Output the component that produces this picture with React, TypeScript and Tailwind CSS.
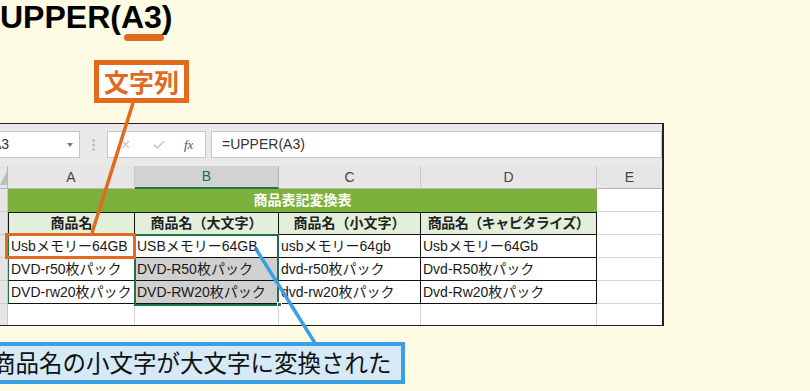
import { Check, X } from 'lucide-react'

const cellFont = { fontFamily: '"Liberation Sans", "Noto Sans CJK JP", sans-serif' }

const rows = [
  ['Usbメモリー64GB', 'USBメモリー64GB', 'usbメモリー64gb', 'Usbメモリー64Gb'],
  ['DVD-r50枚パック', 'DVD-R50枚パック', 'dvd-r50枚パック', 'Dvd-R50枚パック'],
  ['DVD-rw20枚パック', 'DVD-RW20枚パック', 'dvd-rw20枚パック', 'Dvd-Rw20枚パック'],
]

function RowHead() {
  return <div className="w-[8px] h-full shrink-0 bg-[#e6e6e6] border-r border-b border-[#c9c9c9]" />
}

function Sheet() {
  return (
    <div className="w-[664px] h-[203px] border-t border-b border-r-2 border-[#222] bg-white flex flex-col" style={cellFont}>
      {/* formula bar */}
      <div className="h-[42px] bg-[#e9e9e9] flex items-start pt-[7px] overflow-hidden">
        <div className="ml-[-10px] w-[90px] h-[27px] shrink-0 bg-white border border-[#c6c6c6] flex items-center pl-[1px] text-[14px] text-[#333] relative">
          A3
          <svg className="absolute right-[6px] top-[11px]" width="6" height="4" viewBox="0 0 6 4">
            <path d="M0 0h6L3 4z" fill="#7a7a7a" />
          </svg>
        </div>
        <div className="w-[27px] h-[27px] shrink-0 flex items-center justify-center">
          <svg width="3" height="12" viewBox="0 0 3 12">
            <circle cx="1.5" cy="1.5" r="1.2" fill="#b3b3b3" />
            <circle cx="1.5" cy="6" r="1.2" fill="#b3b3b3" />
            <circle cx="1.5" cy="10.5" r="1.2" fill="#b3b3b3" />
          </svg>
        </div>
        <div className="w-[99px] h-[27px] shrink-0 bg-white border border-[#c6c6c6] relative">
          <X className="absolute left-[11px] top-[6px] w-[13px] h-[13px] text-[#c4c4c4]" strokeWidth={2} />
          <Check className="absolute left-[44px] top-[6px] w-[14px] h-[14px] text-[#c4c4c4]" strokeWidth={2.5} />
          <span className="absolute left-[76px] top-[3px] text-[13px] italic text-[#555]" style={{ fontFamily: '"Liberation Serif", serif' }}>
            fx
          </span>
        </div>
        <div className="ml-[5px] flex-1 h-[27px] bg-white border border-[#c6c6c6] flex items-center pl-[10px] text-[14px] text-[#333]">
          =UPPER(A3)
        </div>
      </div>

      {/* column headers */}
      <div className="h-[23px] flex bg-[#e6e6e6] text-[14px] text-[#444] shrink-0">
        <div className="w-[8px] h-full shrink-0 border-r border-b border-[#b5b5b5] relative">
          <svg className="absolute left-0 bottom-[3px]" width="7" height="14" viewBox="0 0 7 14">
            <path d="M7 0v14H0z" fill="#bdbdbd" />
          </svg>
        </div>
        <div className="w-[127px] border-r border-b border-[#c9c9c9] border-b-[#b5b5b5] flex items-center justify-center">A</div>
        <div className="w-[144px] bg-[#d2d2d2] border-r border-[#b5b5b5] border-b-2 border-b-[#217346] flex items-center justify-center text-[#217346]">B</div>
        <div className="w-[142px] border-r border-b border-[#c9c9c9] border-b-[#b5b5b5] flex items-center justify-center">C</div>
        <div className="w-[176px] border-r border-b border-[#c9c9c9] border-b-[#b5b5b5] flex items-center justify-center">D</div>
        <div className="flex-1 border-b border-[#b5b5b5] flex items-center justify-center">E</div>
      </div>

      {/* title row */}
      <div className="h-[23px] flex shrink-0">
        <RowHead />
        <div className="w-[589px] bg-[#7cb13e] flex items-center justify-center text-white text-[14px] font-bold">商品表記変換表</div>
        <div className="flex-1 border-b border-[#d6d6d6]" />
      </div>

      {/* header row */}
      <div className="h-[23px] flex shrink-0 text-[14px] font-bold text-[#222]">
        <RowHead />
        <div className="w-[127px] bg-[#e2efda] border border-[#111] flex items-center justify-center">商品名</div>
        <div className="w-[144px] bg-[#e2efda] border-t border-r border-b border-[#111] flex items-center justify-center">商品名（大文字）</div>
        <div className="w-[142px] bg-[#e2efda] border-t border-r border-b border-[#111] flex items-center justify-center">商品名（小文字）</div>
        <div className="w-[176px] bg-[#e2efda] border-t border-r border-b border-[#111] flex items-center justify-center tracking-[-0.5px]">商品名（キャピタライズ）</div>
        <div className="flex-1 border-b border-[#d6d6d6]" />
      </div>

      {/* data rows */}
      {rows.map((r, i) => (
        <div key={i} className="h-[23px] flex shrink-0 text-[14px] text-[#1a1a1a]">
          <RowHead />
          <div className="w-[127px] bg-white border-l border-l-[#217346] border-r border-b border-[#111] pl-[2px] leading-[22px] whitespace-nowrap overflow-hidden">{r[0]}</div>
          <div className={`w-[144px] ${i > 0 ? 'bg-[#d0d0d0]' : 'bg-white'} border-r border-b border-[#111] pl-[2px] leading-[22px] whitespace-nowrap overflow-hidden`}>{r[1]}</div>
          <div className="w-[142px] bg-white border-r border-b border-[#111] pl-[2px] leading-[22px] whitespace-nowrap overflow-hidden">{r[2]}</div>
          <div className="w-[176px] bg-white border-r border-b border-[#111] pl-[2px] leading-[22px] whitespace-nowrap overflow-hidden">{r[3]}</div>
          <div className="flex-1 border-b border-[#d6d6d6]" />
        </div>
      ))}

      {/* empty row */}
      <div className="flex-1 flex">
        <div className="w-[8px] h-full shrink-0 bg-[#e6e6e6] border-r border-[#c9c9c9]" />
        <div className="w-[127px] border-r border-[#d6d6d6]" />
        <div className="w-[144px] border-r border-[#d6d6d6]" />
        <div className="w-[142px] border-r border-[#d6d6d6]" />
        <div className="w-[176px] border-r border-[#d6d6d6]" />
        <div className="flex-1" />
      </div>
    </div>
  )
}

export default function App() {
  return (
    <div className="relative w-[810px] h-[391px] overflow-hidden bg-[#fdfbe4]">
      <div className="h-[34px] leading-[34px] text-[32px] font-bold text-black whitespace-nowrap" style={{ fontFamily: '"Liberation Sans", Arial, sans-serif' }}>
        UPPER(A3)
      </div>
      <div className="ml-[124px] w-[40px] h-[7px] rounded-full bg-[#e36a1c]" />

      <div
        className="mt-[19px] ml-[94px] w-[95px] h-[43px] border-[5px] border-[#e36a1c] bg-white flex items-center justify-center text-[25px] font-bold text-[#e36a1c] leading-none"
        style={{ fontFamily: '"Noto Sans CJK JP", sans-serif' }}
      >
        文字列
      </div>

      <div className="mt-[20px]">
        <Sheet />
      </div>

      <div
        className="mt-[16px] ml-[-14px] w-[419px] h-[42px] border-[4px] border-[#3c9fe1] bg-[#d5e9f7] flex items-center pl-[2px] text-[23.5px] text-[#111] whitespace-nowrap leading-none"
        style={{ fontFamily: '"Noto Sans CJK JP", sans-serif' }}
      >
        商品名の小文字が大文字に変換された
      </div>

      {/* selection marks */}
      <div className="absolute left-[134px] top-[234px] w-[145px] h-[72px] border-2 border-[#217346] pointer-events-none" />
      <div className="absolute left-[277px] top-[302px] w-[5px] h-[5px] bg-[#217346] border border-white" />
      <div className="absolute left-[5px] top-[233px] w-[131px] h-[26px] border-[3px] border-[#e36a1c] pointer-events-none" />

      {/* leader lines */}
      <svg className="absolute inset-0 pointer-events-none" width="810" height="391" viewBox="0 0 810 391">
        <line x1="133" y1="103" x2="92" y2="233" stroke="#e36a1c" strokeWidth="3.5" />
        <line x1="256" y1="249" x2="315" y2="343" stroke="#3c9fe1" strokeWidth="3.5" />
        <circle cx="256" cy="249" r="1.8" fill="#2a7fc0" />
      </svg>
    </div>
  )
}
